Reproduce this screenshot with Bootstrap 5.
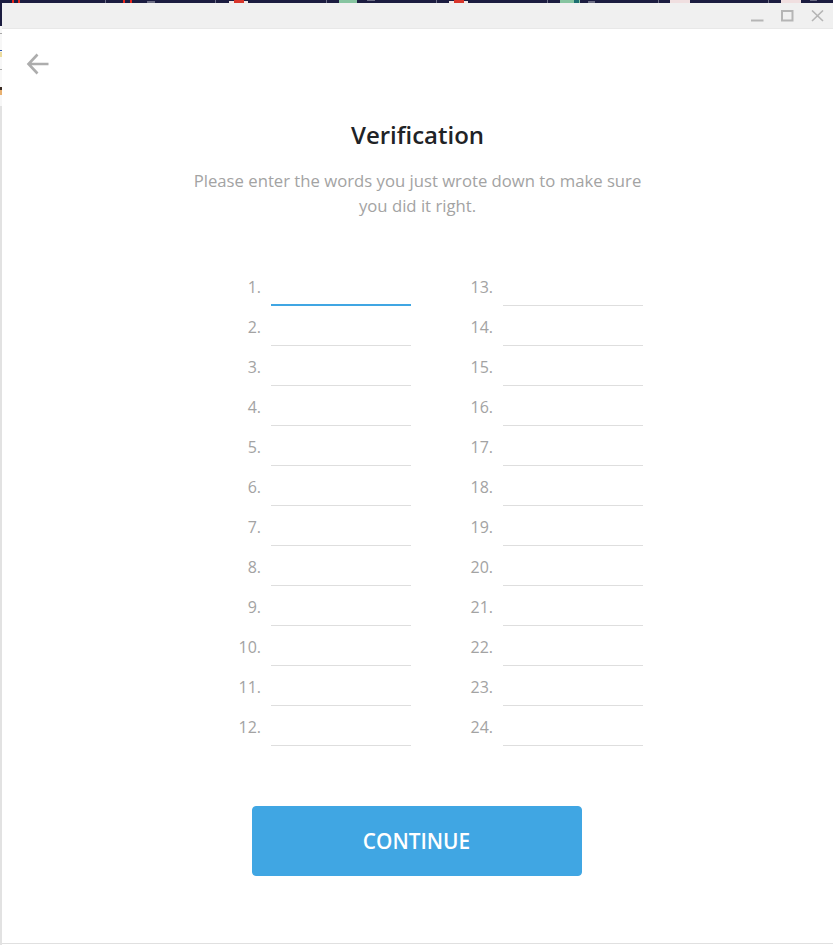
<!DOCTYPE html>
<html>

<head>
  <title>Verification</title>
  <link href="https://cdn.jsdelivr.net/npm/bootstrap@5.3.2/dist/css/bootstrap.min.css" rel="stylesheet">
  <style>
    body { background: #fff; font-family: "Open Sans", sans-serif; height: 945px; overflow: hidden; }
    .desk-strip { height: 3px; display: block; }
    .desk-edge { position: absolute; left: 0; top: 0; display: block; }
    .app-window { height: 941px; margin-left: 2px; border-bottom: 1px solid #e0e0e0; position: relative; }
    .title-bar { height: 26px; background: #f0f0f0; border-bottom: 1px solid #e8e8e8; }
    .title-bar svg { display: block; }
    .title-btns { margin-left: 749px; gap: 17px; }
    .back-row { height: 90px; padding: 24px 0 0 24px; }
    .verify-title { font-size: 24px; line-height: 32px; font-weight: 600; color: #1f2326; margin: 0 0 17px; }
    .verify-text { font-size: 16.7px; line-height: 25px; color: #a3a3a3; width: 460px; margin: 0 auto 49px; }
    .words-grid { width: 441px; margin-left: 201px; column-gap: 24px; display: grid; grid-template-columns: 208px 208px; grid-auto-flow: column; grid-template-rows: repeat(12, 40px); }
    .word-row { display: flex; gap: 10px; align-items: flex-start; }
    .word-num { width: 58px; text-align: right; font-size: 16px; line-height: 40px; color: #a3a3a3; }
    .word-input { width: 140px; height: 39px; border: 0; border-bottom: 1px solid #dedede; background: none; outline: none; padding: 0; }
    .word-input.active { border-bottom: 2px solid #40a6e3; }
    .continue-btn { width: 330px; height: 70px; margin-top: 59px; margin-right: 2px; padding: 8px 12px 6px; background: #40a6e3; border-color: #40a6e3; color: #fff; font-size: 20.8px; font-weight: 600; border-radius: 4px; }
    .continue-btn:hover { background: #40a6e3; border-color: #40a6e3; color: #fff; }
  </style>
</head>

<body>
  <!-- bits of the desktop showing behind the window -->
  <svg class="desk-strip" width="833" height="3" viewBox="0 0 833 3">
    <rect width="833" height="3" fill="#1b1c40"/>
    <g fill="#6b6c84">
      <rect x="105" width="1" height="3"/><rect x="215" width="1" height="3"/><rect x="326" width="1" height="3"/>
      <rect x="436" width="1" height="3"/><rect x="547" width="1" height="3"/><rect x="658" width="1" height="3"/><rect x="768" width="1" height="3"/>
      <rect x="147" y="1" width="8" height="2"/><rect x="367" width="8" height="1"/><rect x="588" y="1" width="7" height="2"/><rect x="810" width="7" height="1"/>
    </g>
    <g fill="#e8261c">
      <rect x="12" width="2" height="3"/><rect x="18" width="2" height="3"/><rect x="123" width="2" height="3"/><rect x="130" width="2" height="3"/>
    </g>
    <rect x="229" y="1" width="19" height="2" fill="#f3e9e6"/><rect x="234" width="10" height="3" fill="#d9352b"/>
    <rect x="449" y="1" width="19" height="2" fill="#f3e9e6"/><rect x="454" width="10" height="3" fill="#d9352b"/>
    <rect x="339" width="18" height="3" fill="#86c4a0"/>
    <rect x="560" width="20" height="3" fill="#86c4a0"/><rect x="574" width="5" height="3" fill="#1b6e70"/>
    <rect x="670" width="20" height="3" fill="#f0dfe0"/><rect x="781" width="20" height="3" fill="#f0dfe0"/>
  </svg>
  <svg class="desk-edge" width="2" height="945" viewBox="0 0 2 945">
    <rect width="2" height="945" fill="#e2e2e2"/>
    <rect width="2" height="26" fill="#1b1c40"/>
    <rect y="26" width="2" height="80" fill="#f7f7f7"/>
    <rect y="33" width="2" height="1" fill="#a8a8a8"/><rect y="50" width="2" height="1" fill="#2a55b0"/>
    <rect y="52" width="2" height="5" fill="#ecdca0"/><rect y="69" width="2" height="1" fill="#a8a8a8"/>
    <rect y="87" width="2" height="3" fill="#3a2a20"/><rect y="90" width="2" height="5" fill="#e8b070"/>
  </svg>
  <div class="app-window">
    <div class="title-bar d-flex align-items-center">
      <div class="title-btns d-flex">
        <svg width="13" height="12" viewBox="0 0 13 12"><rect x="0" y="9.500" width="12.500" height="2" fill="#b5b5b5"/></svg>
        <svg width="13" height="12" viewBox="0 0 13 12"><rect x="1" y="1" width="10.500" height="9.500" fill="none" stroke="#b5b5b5" stroke-width="2"/></svg>
        <svg width="13" height="12" viewBox="0 0 13 12"><path d="M1 0.500L12 11M12 0.500L1 11" stroke="#b5b5b5" stroke-width="1.600" fill="none"/></svg>
      </div>
    </div>
    <div class="back-row">
      <svg class="d-block" width="24" height="22" viewBox="0 0 24 22"><path d="M22.500 11H3M11.500 1.500L2.500 11L11.500 20.500" stroke="#adadad" stroke-width="2.600" fill="none"/></svg>
    </div>
    <h1 class="verify-title text-center">Verification</h1>
    <p class="verify-text text-center">Please enter the words you just wrote down to make sure you did it right.</p>
    <form>
      <div class="words-grid" id="wordsGrid"></div>
      <div class="text-center">
        <button type="button" class="btn continue-btn">CONTINUE</button>
      </div>
    </form>
  </div>

  <script src="https://cdn.jsdelivr.net/npm/bootstrap@5.3.2/dist/js/bootstrap.bundle.min.js"></script>
  <script>
    const wordsGrid = document.querySelector("#wordsGrid");

    for (let i = 1; i <= 24; i++) {
      const row = document.createElement('div');
      row.className = `word-row`;
      row.innerHTML = `<span class="word-num">${i}.</span><input type="text" class="word-input ${i === 1 ? 'active' : ''}" aria-label="Word ${i}">`;
      wordsGrid.appendChild(row);
    }
  </script>
</body>

</html>
